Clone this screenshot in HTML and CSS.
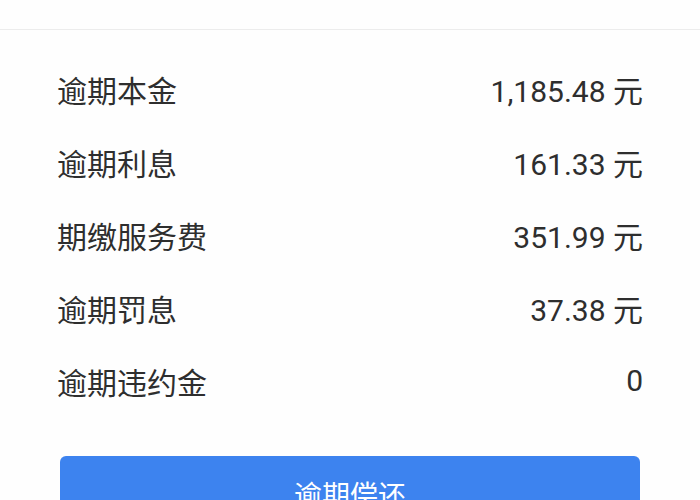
FILE: index.html
```html
<!DOCTYPE html>
<html lang="zh-CN">
<head>
<meta charset="utf-8">
<link rel="stylesheet" href="styles.css">
</head>
<body>
<div class="page">
  <div class="header"></div>
  <div class="list">
    <div class="row"><span class="label">逾期本金</span><span class="value">1,185.48 元</span></div>
    <div class="row"><span class="label">逾期利息</span><span class="value">161.33 元</span></div>
    <div class="row"><span class="label">期缴服务费</span><span class="value">351.99 元</span></div>
    <div class="row"><span class="label">逾期罚息</span><span class="value">37.38 元</span></div>
    <div class="row"><span class="label">逾期违约金</span><span class="value">0</span></div>
  </div>
  <div class="actions">
    <button class="btn">逾期偿还</button>
  </div>
</div>
</body>
</html>
```
FILE: styles.css
```css
html, body {
  margin: 0;
  padding: 0;
  background: #fefefe;
}
.page {
  width: 700px;
  height: 500px;
  overflow: hidden;
  font-family: Roboto, "Noto Sans CJK SC", sans-serif;
  color: #2e2e2e;
}
.header {
  height: 29px;
  border-bottom: 1px solid #ececec;
}
.list {
  padding: 22px 57px 0 57px;
}
.row {
  height: 73px;
  display: flex;
  align-items: center;
  justify-content: space-between;
}
.label {
  font-family: "Noto Sans CJK SC", sans-serif;
  font-size: 30px;
}
.value {
  font-size: 30px;
  padding-right: 0;
}
.actions {
  padding: 39px 60px 0 60px;
}
.btn {
  display: block;
  width: 100%;
  height: 76px;
  border: 0;
  border-radius: 6px;
  background: #3d83ef;
  color: #fff;
  font-family: "Noto Sans CJK SC", sans-serif;
  font-size: 28px;
  padding: 0;
}
```
